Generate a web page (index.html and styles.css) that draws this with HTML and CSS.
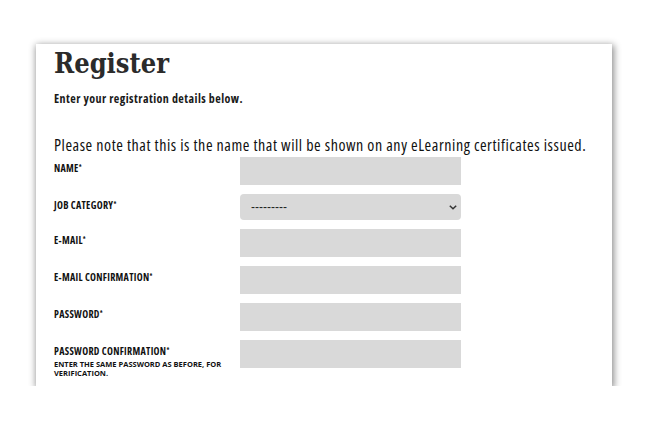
FILE: index.html
```html
<!DOCTYPE html>
<html lang="en">
<head>
<meta charset="utf-8">
<title>Register</title>
<link rel="stylesheet" href="styles.css">
</head>
<body>
<div class="page">
  <main class="card">
    <h1 class="title">Register</h1>
    <p class="intro">Enter your registration details below.</p>
    <p class="note">Please note that this is the name that will be shown on any eLearning certificates issued.</p>
    <form class="form">
      <div class="row">
        <label class="label" for="name">NAME<sup>*</sup></label>
        <input class="field" id="name" type="text">
      </div>
      <div class="row">
        <label class="label" for="job">JOB CATEGORY<sup>*</sup></label>
        <div class="select-wrap">
          <select class="select" id="job"><option>---------</option></select>
          <svg class="chev" width="8" height="5" viewBox="0 0 8 5"><path d="M0.8 0.8 L4 3.8 L7.2 0.8" fill="none" stroke="#333" stroke-width="1.5"/></svg>
        </div>
      </div>
      <div class="row">
        <label class="label" for="email">E-MAIL<sup>*</sup></label>
        <input class="field" id="email" type="email">
      </div>
      <div class="row">
        <label class="label" for="email2">E-MAIL CONFIRMATION<sup>*</sup></label>
        <input class="field" id="email2" type="email">
      </div>
      <div class="row">
        <label class="label" for="pw">PASSWORD<sup>*</sup></label>
        <input class="field" id="pw" type="password">
      </div>
      <div class="row">
        <div class="label-group">
          <label class="label" for="pw2">PASSWORD CONFIRMATION<sup>*</sup></label>
          <span class="help">ENTER THE SAME PASSWORD AS BEFORE, FOR VERIFICATION.</span>
        </div>
        <input class="field" id="pw2" type="password">
      </div>
    </form>
  </main>
</div>
</body>
</html>
```
FILE: styles.css
```css
html, body {
  margin: 0;
  padding: 0;
  background: #ffffff;
}
.page {
  padding: 44px 0 0 36px;
}
.card {
  width: 558px;
  height: 337px;
  padding: 5px 0 0 18px;
  background: #ffffff;
  box-shadow: 1px 2px 7px 1px rgba(0, 0, 0, 0.45);
  overflow: hidden;
  color: #1a1a1a;
  font-family: "Open Sans", "DejaVu Sans Condensed", sans-serif;
  font-stretch: 75%;
}
.title {
  margin: 0;
  font-family: "DejaVu Serif Condensed", "DejaVu Serif", serif;
  font-stretch: normal;
  font-weight: bold;
  font-size: 27px;
  line-height: 30px;
  color: #2b2b2b;
}
.intro {
  margin: 13px 0 0;
  font-size: 12px;
  line-height: 14px;
  font-weight: bold;
  letter-spacing: 0.45px;
}
.note {
  margin: 29px 0 0;
  font-size: 16px;
  line-height: 20px;
  letter-spacing: 0.55px;
  color: #111;
  white-space: nowrap;
}
.form {
  margin-top: 2px;
  display: flex;
  flex-direction: column;
  gap: 9px;
}
.row {
  display: grid;
  grid-template-columns: 186px 221px;
  align-items: start;
}
.label {
  display: block;
  padding-top: 5px;
  font-size: 10px;
  line-height: 12px;
  font-weight: bold;
  letter-spacing: 0.3px;
  color: #111;
}
.label sup {
  font-size: 6.5px;
  vertical-align: 3px;
  line-height: 0;
  letter-spacing: 0;
}
.label-group {
  display: flex;
  flex-direction: column;
}
.help {
  margin-top: 3px;
  width: 170px;
  font-size: 7.5px;
  line-height: 8.5px;
  font-weight: bold;
  font-stretch: normal;
  color: #111;
}
.field {
  box-sizing: border-box;
  width: 221px;
  height: 28px;
  margin: 0;
  border: 0;
  background: #d9d9d9;
}
.select-wrap {
  position: relative;
  width: 221px;
  height: 26px;
}
.select {
  appearance: none;
  -webkit-appearance: none;
  box-sizing: border-box;
  width: 221px;
  height: 26px;
  margin: 0;
  border: 0;
  border-radius: 4px;
  background: #d9d9d9;
  padding: 0 0 0 11px;
  font-family: "Liberation Sans", sans-serif;
  font-size: 12px;
  color: #222;
}
.chev {
  position: absolute;
  right: 4px;
  top: 11px;
}
```
